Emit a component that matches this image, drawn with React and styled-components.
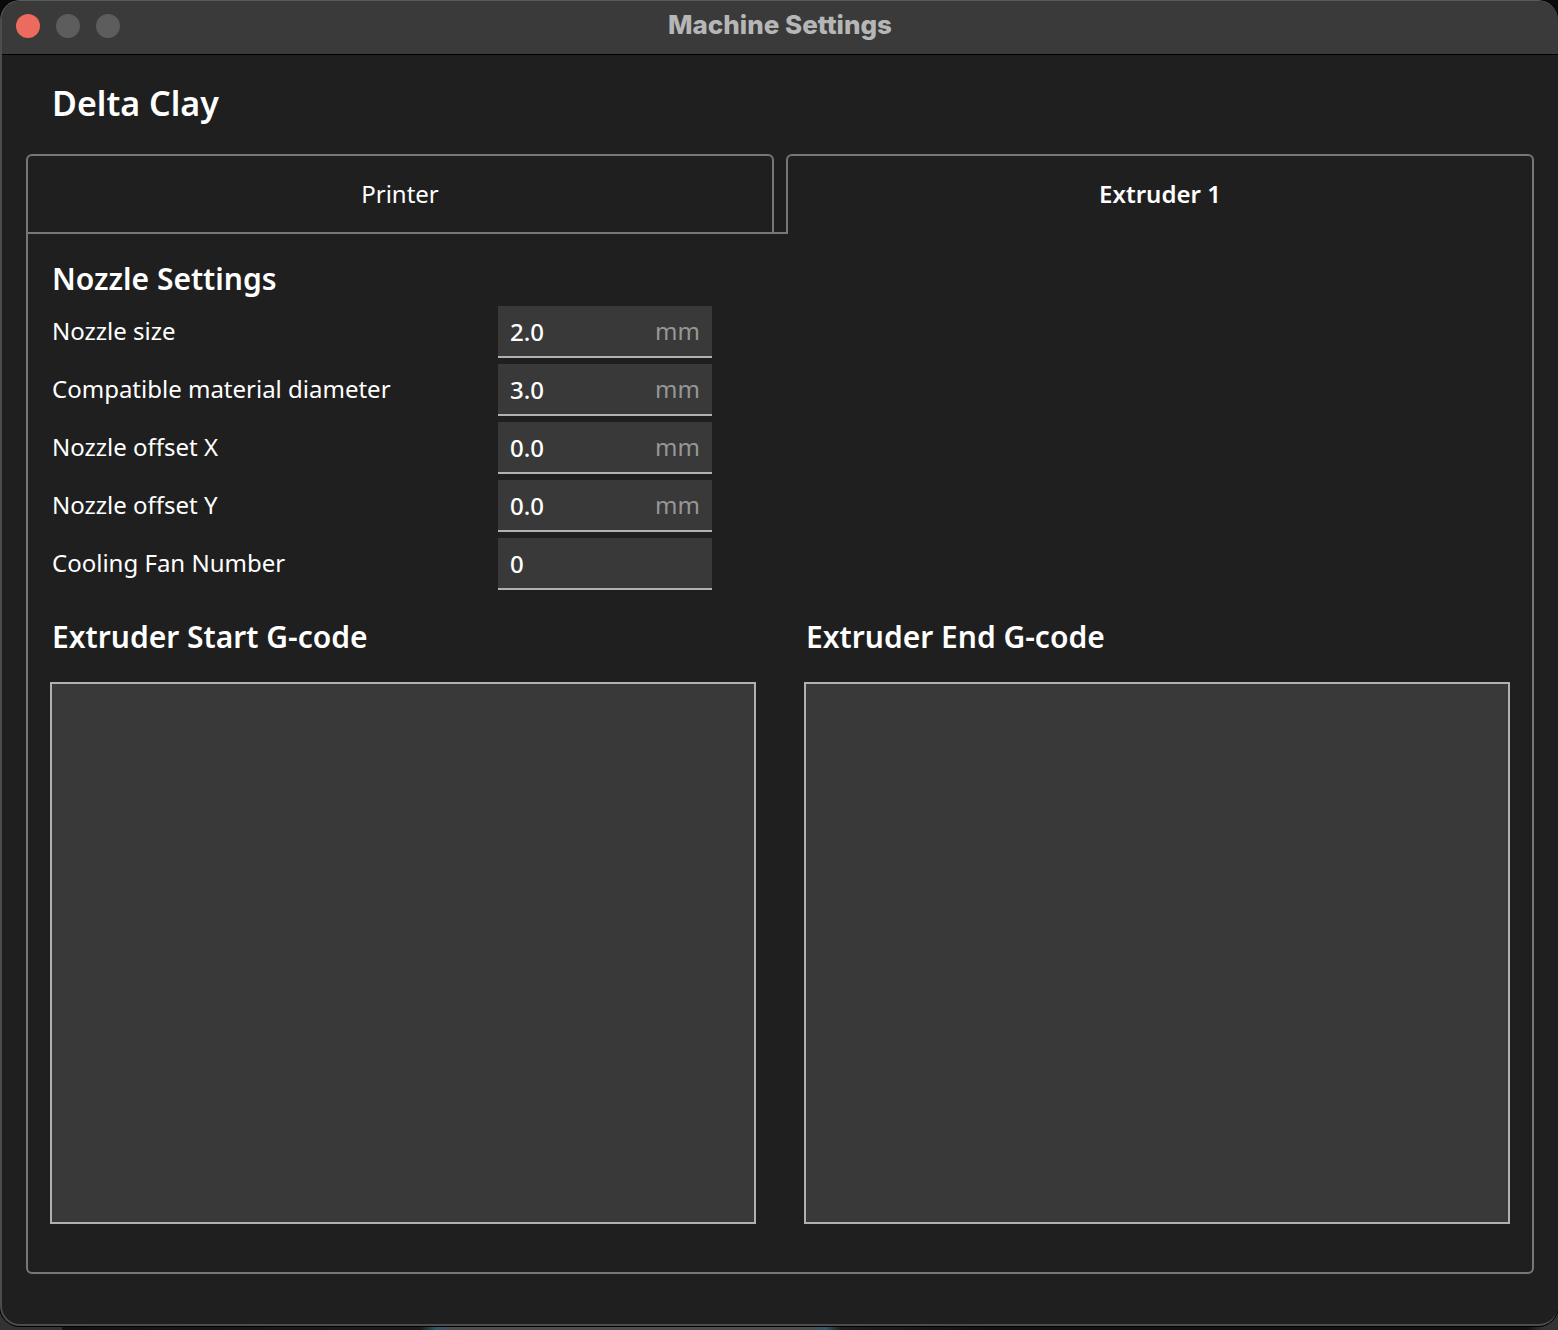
import React, { useState } from "react";
import styled, { createGlobalStyle } from "styled-components";

const color = {
  bg: "#1f1f1f",
  bar: "#3a3a3a",
  field: "#393939",
  line: "#777777",
  lineLight: "#b1b1b1",
  text: "#ffffff",
  muted: "#969696",
};

const GlobalStyle = createGlobalStyle`
  *, *::before, *::after { box-sizing: border-box; }
  body {
    margin: 0;
    color: ${color.text};
    font-family: "Noto Sans", "Open Sans", sans-serif;
    font-size: 24px;
    line-height: 32px;
  }
  button, input, textarea { font: inherit; color: inherit; }
`;

const Desktop = styled.div`
  min-height: 100vh;
  padding-bottom: 4px;
  display: flex;
  flex-direction: column;
  background: linear-gradient(
    90deg,
    #333333 0%,
    #333333 4%,
    #141414 4%,
    #1c1c1c 27%,
    #2b5a6b 28%,
    #4d4d4d 29%,
    #4d4d4d 52%,
    #2b5a6b 53%,
    #1f1f1f 54%,
    #121212 64%,
    #121212 98%,
    #333333 99%
  );
`;

const Window = styled.div`
  flex: 1;
  display: flex;
  flex-direction: column;
  overflow: hidden;
  background: ${color.bg};
  border: 2px solid #4c4c4c;
  border-top: 1px solid #5a5a5a;
  border-right: 0;
  border-radius: 20px;
  box-shadow: 0 0 0 1px #000000, 0 -20px 0 0 #0a0a0a;
`;

const TitleBar = styled.header`
  display: grid;
  grid-template-columns: 1fr auto 1fr;
  align-items: center;
  height: 54px;
  padding: 0 14px 4px;
  background: ${color.bar};
  border-bottom: 1px solid #000000;
`;

const WindowButtons = styled.div`
  display: flex;
  gap: 16px;
`;

const WindowButton = styled.button`
  width: 24px;
  height: 24px;
  padding: 0;
  border: 0;
  border-radius: 50%;
  background: ${(p) => p.$fill};
`;

const WindowTitle = styled.div`
  padding-bottom: 2px;
  font-family: Inter, sans-serif;
  font-size: 26px;
  font-weight: 800;
  color: #b6b6b6;
`;

const Content = styled.main`
  flex: 1;
  display: flex;
  flex-direction: column;
  padding: 23px 24px 50px;
`;

const MachineName = styled.h1`
  margin: 0 0 26px;
  padding-left: 26px;
  font-size: 34px;
  font-weight: 600;
  line-height: 50px;
`;

const Tabs = styled.div`
  display: flex;
  gap: 12px;
  margin-bottom: -2px;
  position: relative;
`;

const Tab = styled.button`
  flex: 1 1 0;
  height: 80px;
  padding: 0 0 ${(p) => (p.$active ? "2px" : "0")};
  background: ${color.bg};
  border: 2px solid ${color.line};
  border-bottom-width: ${(p) => (p.$active ? "0" : "2px")};
  border-radius: 6px 6px 0 0;
  font-weight: ${(p) => (p.$active ? 600 : 400)};
`;

const Panel = styled.section`
  flex: 1;
  display: flex;
  flex-direction: column;
  padding: 24px 22px 48px;
  border: 2px solid ${color.line};
  border-radius: 0 0 6px 6px;
`;

const SectionTitle = styled.h2`
  margin: 0;
  padding-left: 2px;
  font-size: 30px;
  font-weight: 600;
  line-height: 42px;
`;

const Settings = styled.div`
  display: flex;
  flex-direction: column;
  gap: 6px;
  padding: 6px 2px 26px;
`;

const SettingRow = styled.div`
  display: grid;
  grid-template-columns: 446px 214px;
  align-items: center;
`;

const SettingLabel = styled.label`
  padding-bottom: 2px;
`;

const Field = styled.div`
  display: flex;
  align-items: center;
  height: 52px;
  padding: 0 12px;
  background: ${color.field};
  border-bottom: 2px solid ${color.lineLight};
`;

const FieldInput = styled.input`
  flex: 1;
  min-width: 0;
  height: 100%;
  padding: 0;
  border: 0;
  outline: 0;
  background: transparent;
  font-weight: 500;
`;

const Unit = styled.span`
  color: ${color.muted};
`;

const CodeGrid = styled.div`
  flex: 1;
  display: grid;
  grid-template-columns: 1fr 1fr;
  gap: 48px;
`;

const CodeColumn = styled.div`
  display: flex;
  flex-direction: column;
  gap: 24px;
`;

const CodeArea = styled.textarea`
  flex: 1;
  min-height: 200px;
  padding: 12px;
  resize: none;
  outline: 0;
  background: ${color.field};
  border: 2px solid ${color.lineLight};
  border-radius: 0;
`;

const settings = [
  { id: "nozzle-size", label: "Nozzle size", value: "2.0", unit: "mm" },
  { id: "material-diameter", label: "Compatible material diameter", value: "3.0", unit: "mm" },
  { id: "offset-x", label: "Nozzle offset X", value: "0.0", unit: "mm" },
  { id: "offset-y", label: "Nozzle offset Y", value: "0.0", unit: "mm" },
  { id: "fan-number", label: "Cooling Fan Number", value: "0" },
];

const codeBlocks = [
  { id: "start-gcode", label: "Extruder Start G-code" },
  { id: "end-gcode", label: "Extruder End G-code" },
];

const tabs = ["Printer", "Extruder 1"];

export default function App() {
  const [active, setActive] = useState("Extruder 1");

  return (
    <Desktop>
      <GlobalStyle />
      <Window>
        <TitleBar>
          <WindowButtons>
            <WindowButton $fill="#ec6a5e" aria-label="Close" />
            <WindowButton $fill="#5d5d5d" aria-label="Minimize" />
            <WindowButton $fill="#5d5d5d" aria-label="Zoom" />
          </WindowButtons>
          <WindowTitle>Machine Settings</WindowTitle>
        </TitleBar>
        <Content>
          <MachineName>Delta Clay</MachineName>
          <Tabs role="tablist">
            {tabs.map((name) => (
              <Tab
                key={name}
                role="tab"
                aria-selected={name === active}
                $active={name === active}
                onClick={() => setActive(name)}
              >
                {name}
              </Tab>
            ))}
          </Tabs>
          <Panel role="tabpanel">
            <SectionTitle>Nozzle Settings</SectionTitle>
            <Settings>
              {settings.map(({ id, label, value, unit }) => (
                <SettingRow key={id}>
                  <SettingLabel htmlFor={id}>{label}</SettingLabel>
                  <Field>
                    <FieldInput id={id} type="text" defaultValue={value} />
                    {unit && <Unit>{unit}</Unit>}
                  </Field>
                </SettingRow>
              ))}
            </Settings>
            <CodeGrid>
              {codeBlocks.map(({ id, label }) => (
                <CodeColumn key={id}>
                  <SectionTitle as="label" htmlFor={id}>{label}</SectionTitle>
                  <CodeArea id={id} />
                </CodeColumn>
              ))}
            </CodeGrid>
          </Panel>
        </Content>
      </Window>
    </Desktop>
  );
}
